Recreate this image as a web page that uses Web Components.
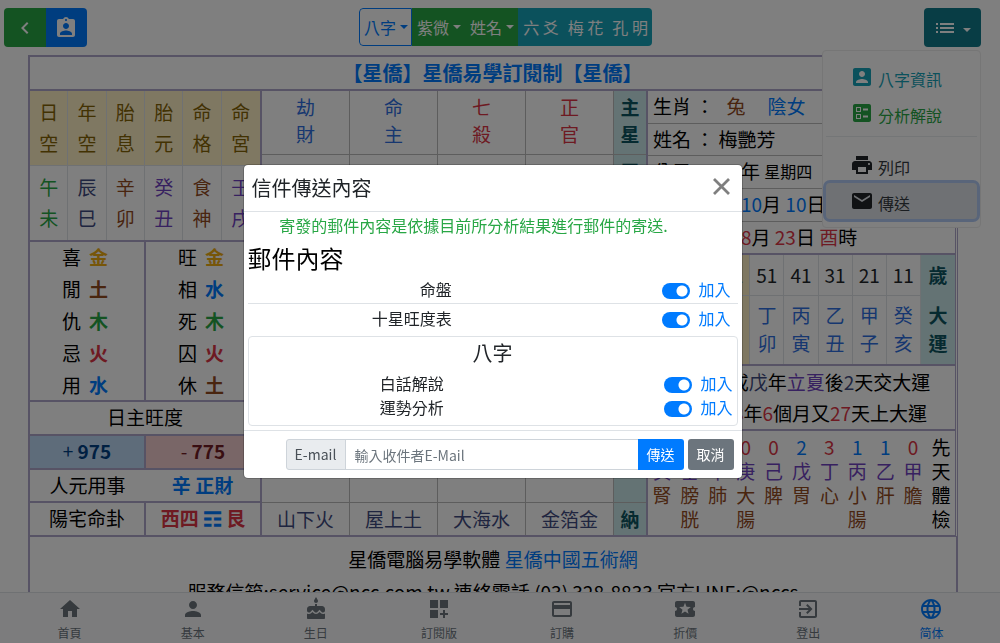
<!DOCTYPE html>
<html lang="zh-Hant">
<head>
<meta charset="utf-8">
<meta name="viewport" content="width=device-width, initial-scale=1">
<title>星僑易學訂閱制</title>
<style>
  :root {
    --blue: #007bff; --green: #28a745; --teal: #17a2b8; --red: #dc3545; --royal: #2f6fe0;
    --purple: #6f42c1; --brown: #934a1e; --navy: #3f4a80; --gold: #eeac12;
    --rule: #aea6ca; --thin: #bbb; --cell: #dee2e6; --head: #c8e6e8; --sand: #fff0c4;
  }
  html { height: 100%; overflow: hidden; }
  body {
    margin: 0; padding-right: 15px; box-sizing: border-box; height: 100%;
    overflow: hidden; background: #fff; color: #000;
    font: 19px/32px "Noto Sans CJK TC", "Noto Sans", sans-serif;
  }
</style>
</head>
<body>
<app-header></app-header>
<fate-chart>
  <span slot="title">【星僑】星僑易學訂閱制【星僑】</span>
</fate-chart>
<bottom-nav></bottom-nav>
<mail-modal>
  <span slot="title">信件傳送內容</span>
  <join-row name="命盤"></join-row>
  <join-row name="十星旺度表"></join-row>
  <join-row name="白話解說" slot="card"></join-row>
  <join-row name="運勢分析" slot="card"></join-row>
</mail-modal>

<script>
const ICONS = {
  back: 'M15.41 16.59L10.83 12l4.58-4.59L14 6l-6 6 6 6z',
  clip: 'M19 3h-4.18C14.4 1.84 13.3 1 12 1c-1.3 0-2.4.84-2.82 2H5c-1.1 0-2 .9-2 2v14c0 1.1.9 2 2 2h14c1.1 0 2-.9 2-2V5c0-1.1-.9-2-2-2zm-7 0c.55 0 1 .45 1 1s-.45 1-1 1-1-.45-1-1 .45-1 1-1zm0 4c1.66 0 3 1.34 3 3s-1.34 3-3 3-3-1.34-3-3 1.34-3 3-3zm6 12H6v-1.4c0-2 4-3.1 6-3.1s6 1.1 6 3.1V19z',
  list: 'M3 13h2v-2H3v2zm0 4h2v-2H3v2zm0-8h2V7H3v2zm4 4h14v-2H7v2zm0 4h14v-2H7v2zM7 7v2h14V7H7z',
  account: 'M3 5v14c0 1.1.89 2 2 2h14c1.1 0 2-.9 2-2V5c0-1.1-.9-2-2-2H5c-1.11 0-2 .9-2 2zm12 4c0 1.66-1.34 3-3 3s-3-1.34-3-3 1.34-3 3-3 3 1.34 3 3zm-9 8c0-2 4-3.1 6-3.1s6 1.1 6 3.1v1H6v-1z',
  ballot: 'M13 9.5h5v-2h-5v2zm0 7h5v-2h-5v2zm6 4.5H5c-1.1 0-2-.9-2-2V5c0-1.1.9-2 2-2h14c1.1 0 2 .9 2 2v14c0 1.1-.9 2-2 2zM6 11h5V6H6v5zm1-4h3v3H7V7zM6 18h5v-5H6v5zm1-4h3v3H7v-3z',
  print: 'M19 8H5c-1.66 0-3 1.34-3 3v6h4v4h12v-4h4v-6c0-1.66-1.34-3-3-3zm-3 11H8v-5h8v5zm3-7c-.55 0-1-.45-1-1s.45-1 1-1 1 .45 1 1-.45 1-1 1zm-1-9H6v4h12V3z',
  mail: 'M20 4H4c-1.1 0-1.99.9-1.99 2L2 18c0 1.1.9 2 2 2h16c1.1 0 2-.9 2-2V6c0-1.1-.9-2-2-2zm0 4l-8 5-8-5V6l8 5 8-5v2z',
  home: 'M10 20v-6h4v6h5v-8h3L12 3 2 12h3v8z',
  person: 'M12 12c2.21 0 4-1.79 4-4s-1.79-4-4-4-4 1.79-4 4 1.79 4 4 4zm0 2c-2.67 0-8 1.34-8 4v2h16v-2c0-2.66-5.33-4-8-4z',
  cake: 'M12 6c1.11 0 2-.9 2-2 0-.38-.1-.73-.29-1.03L12 0l-1.71 2.97c-.19.3-.29.65-.29 1.03 0 1.1.9 2 2 2zm4.6 9.99l-1.07-1.07-1.08 1.07c-1.3 1.3-3.58 1.31-4.89 0l-1.07-1.07-1.09 1.07C6.75 16.64 5.88 17 4.96 17c-.73 0-1.4-.23-1.96-.61V21c0 .55.45 1 1 1h16c.55 0 1-.45 1-1v-4.61c-.56.38-1.23.61-1.96.61-.92 0-1.79-.36-2.44-1.01zM18 9h-5V7h-2v2H6c-1.66 0-3 1.34-3 3v1.54c0 1.08.88 1.96 1.96 1.96.52 0 1.02-.2 1.38-.57l2.14-2.13 2.13 2.13c.74.74 2.03.74 2.77 0l2.14-2.13 2.13 2.13c.37.37.86.57 1.38.57 1.08 0 1.96-.88 1.96-1.96V12C21 10.34 19.66 9 18 9z',
  widgets: 'M3 11h8V3H3v8zM13 3v8h8V3h-8zM3 21h8v-8H3v8zM18 13h-2v3h-3v2h3v3h2v-3h3v-2h-3z',
  card: 'M20 4H4c-1.11 0-1.99.89-1.99 2L2 18c0 1.11.89 2 2 2h16c1.11 0 2-.89 2-2V6c0-1.11-.89-2-2-2zm0 14H4v-6h16v6zm0-10H4V6h16v2z',
  ticket: 'M20 12c0-1.1.9-2 2-2V6c0-1.1-.9-2-2-2H4c-1.1 0-1.99.9-1.99 2v4c1.1 0 1.99.9 1.99 2s-.89 2-2 2v4c0 1.1.9 2 2 2h16c1.1 0 2-.9 2-2v-4c-1.1 0-2-.9-2-2zm-4.42 4.8L12 14.5l-3.58 2.3 1.08-4.12-3.29-2.69 4.24-.25L12 5.8l1.54 3.95 4.24.25-3.29 2.69 1.09 4.11z',
  exit: 'M10.09 15.59L11.5 17l5-5-5-5-1.41 1.41L12.67 11H3v2h9.67l-2.58 2.59zM19 3H5c-1.11 0-2 .9-2 2v4h2V5h14v14H5v-4H3v4c0 1.1.89 2 2 2h14c1.1 0 2-.9 2-2V5c0-1.1-.9-2-2-2z',
  globe: 'M11.99 2C6.47 2 2 6.48 2 12s4.47 10 9.99 10C17.52 22 22 17.52 22 12S17.52 2 11.99 2zm6.93 6h-2.95c-.32-1.25-.78-2.45-1.38-3.56 1.84.63 3.37 1.91 4.33 3.56zM12 4.04c.83 1.2 1.48 2.53 1.91 3.96h-3.82c.43-1.43 1.08-2.76 1.91-3.96zM4.26 14C4.1 13.36 4 12.69 4 12s.1-1.36.26-2h3.38c-.08.66-.14 1.32-.14 2 0 .68.06 1.34.14 2H4.26zm.82 2h2.95c.32 1.25.78 2.45 1.38 3.56-1.84-.63-3.37-1.9-4.33-3.56zm2.95-8H5.08c.96-1.66 2.49-2.93 4.33-3.56C8.81 5.55 8.35 6.75 8.03 8zM12 19.96c-.83-1.2-1.48-2.53-1.91-3.96h3.82c-.43 1.43-1.08 2.76-1.91 3.96zM14.34 14H9.66c-.09-.66-.16-1.32-.16-2 0-.68.07-1.35.16-2h4.68c.09.65.16 1.32.16 2 0 .68-.07 1.34-.16 2zm.25 5.56c.6-1.11 1.06-2.31 1.38-3.56h2.95c-.96 1.65-2.49 2.93-4.33 3.56zM16.36 14c.08-.66.14-1.32.14-2 0-.68-.06-1.34-.14-2h3.38c.16.64.26 1.31.26 2s-.1 1.36-.26 2h-3.38z'
};

const COLORS = `
  .blue{color:var(--blue)} .green{color:var(--green)} .red{color:var(--red)}
  .purple{color:var(--purple)} .brown{color:var(--brown)} .navy{color:var(--navy)}
  .gold{color:var(--gold)} .teal{color:var(--teal)} .royal{color:var(--royal)}`;

class Base extends HTMLElement {
  constructor() { super(); this.attachShadow({ mode: 'open' }); }
  connectedCallback() { this.shadowRoot.innerHTML = `<style>*{box-sizing:border-box}${this.css()}</style>${this.html()}`; }
}

customElements.define('app-icon', class extends Base {
  css() { return ':host{display:block;width:24px;height:24px;flex:none} svg{display:block;width:100%;height:100%;fill:currentColor}'; }
  html() { return `<svg viewBox="0 0 24 24" aria-hidden="true"><path d="${ICONS[this.getAttribute('name')]}"/></svg>`; }
});

customElements.define('app-header', class extends Base {
  css() { return `
    :host{display:flex;justify-content:space-between;align-items:flex-start;padding:8px 4px;height:55px;box-sizing:border-box}
    button{font:inherit;border:0;margin:0;padding:0;color:#fff;display:flex;align-items:center;justify-content:center;height:100%}
    .group{display:flex;height:39px;border-radius:4px;overflow:hidden}
    .tools{width:83px}
    .tools button{flex:1}
    .nav{height:38px;font-size:16px;line-height:24px}
    .nav button{padding:0 4px 0 5px;gap:4px;white-space:nowrap}
    .nav .outline{background:#fff;color:var(--blue);border:1px solid var(--blue);border-radius:4px 0 0 4px;padding:0 3px 0 4px}
    .g{background:var(--green)} .b{background:var(--blue)} .t{background:var(--teal)}
    .caret::after{content:"";border:4px solid transparent;border-top-color:currentColor;border-bottom:0}
    .more{position:relative;height:39px}
    .more>button{width:57px;background:#117a8b;border-radius:4px;gap:6px}
    .more>button::after{margin-top:5px}
  `; }
  html() { return `
    <div class="group tools">
      <button class="g" aria-label="返回"><app-icon name="back"></app-icon></button>
      <button class="b" aria-label="命盤資料"><app-icon name="clip"></app-icon></button>
    </div>
    <nav class="group nav">
      <button class="outline caret">八字</button>
      <button class="g caret">紫微</button>
      <button class="g caret">姓名</button>
      <button class="t">六 爻</button>
      <button class="t">梅 花</button>
      <button class="t">孔 明</button>
    </nav>
    <div class="more">
      <button class="caret" aria-label="選單"><app-icon name="list"></app-icon></button>
      <action-menu></action-menu>
    </div>`; }
});

customElements.define('action-menu', class extends Base {
  css() { return `
    :host{position:absolute;z-index:5;top:42px;right:0;width:159px;box-sizing:border-box;padding:8px 3px;background:#fff;
      border:1px solid #ececec;border-radius:4px;font-size:16px;line-height:24px}
    a{display:flex;align-items:center;gap:4px;height:36px;padding:0 24px;text-decoration:none;color:#343a40;white-space:nowrap}
    app-icon{color:#212529}
    .teal app-icon{color:var(--teal)} .green app-icon{color:var(--green)}
    a span{padding-top:4px}
    .on{background:#dfe3e8;border-radius:4px;box-shadow:0 0 0 3px #b3cbf5}
    hr{margin:5px 0 10px;border:0;border-top:1px solid #e9ecef}
    ${COLORS} a.teal{color:var(--teal)} a.green{color:var(--green)}`; }
  html() { return `
    <a href="#" class="teal"><app-icon name="account"></app-icon><span>八字資訊</span></a>
    <a href="#" class="green"><app-icon name="ballot"></app-icon><span>分析解說</span></a>
    <hr>
    <a href="#"><app-icon name="print"></app-icon><span>列印</span></a>
    <a href="#" class="on"><app-icon name="mail"></app-icon><span>傳送</span></a>`; }
});

customElements.define('fate-chart', class extends Base {
  css() { return `
    :host{display:block;margin:0 27px 0 28px;border:2px solid var(--rule);border-right:0}
    h1{margin:0;font-size:20px;line-height:32px;text-align:center;color:var(--blue);border-bottom:2px solid var(--rule);border-right:3px double var(--rule)}
    .grid{display:grid;grid-template-columns:232fr 386fr 307fr;border-bottom:2px solid var(--rule);border-right:3px double var(--rule)}
    footer{border-right:2px solid var(--rule);padding:5px 0 60px;text-align:center;line-height:33px}
    footer p{margin:0}
    a{color:var(--blue);text-decoration:none}`; }
  html() { return `
    <h1><slot name="title"></slot></h1>
    <div class="grid"><fate-balance></fate-balance><fate-pillars></fate-pillars><fate-details></fate-details></div>
    <footer>
      <p>星僑電腦易學軟體 <a href="#">星僑中國五術網</a></p>
      <p>服務信箱:service@ncc.com.tw 連絡電話 (03) 328-8833 官方LINE:@nccs</p>
    </footer>`; }
});

customElements.define('fate-balance', class extends Base {
  css() { return `
    :host{display:block;border-right:2px solid var(--rule)}
    table{width:100%;table-layout:fixed;border-spacing:0;line-height:31px}
    th,td{padding:0 0 2px;text-align:center;font-weight:400;height:74px;border-right:1px solid var(--cell)}
    th{height:75px;background:var(--sand);color:#856404;border-bottom:1px solid var(--cell)}
    tr>:last-child{border-right:0}
    .pair{display:grid;grid-template-columns:1fr 1fr;gap:2px;background:var(--rule);border-top:2px solid var(--rule);text-align:center;line-height:30px}
    .pair>*{background:#fff;padding-bottom:2px}
    .pair.joined{gap:0}
    .joined>*{padding-bottom:1px}
    .pair>ul{margin:0;padding:0 4px 0 0;list-style:none;display:grid;gap:2px}
    li{display:flex;justify-content:center;gap:8px}
    .whole{grid-column:1/-1}
    .pair .plus{background:#bcd8f5;color:#004085} .pair .minus{background:#f2cccf;color:#721c24}
    .gua{font-weight:400}
    ${COLORS}`; }
  html() {
    const list = rows => `<ul>${rows.map(([k, v, c]) => `<li><span>${k}</span><b class="${c}">${v}</b></li>`).join('')}</ul>`;
    return `
    <table>
      <tr>${['日空', '年空', '胎息', '胎元', '命格', '命宮'].map(t => `<th scope="col">${t[0]}<br>${t[1]}</th>`).join('')}</tr>
      <tr>${[['午未', 'green'], ['辰巳', 'navy'], ['辛卯', 'brown'], ['癸丑', 'purple'], ['食神', 'brown'], ['壬戌', 'purple']]
        .map(([t, c]) => `<td class="${c}">${t[0]}<br>${t[1]}</td>`).join('')}</tr>
    </table>
    <div class="pair">
      ${list([['喜', '金', 'gold'], ['閒', '土', 'brown'], ['仇', '木', 'green'], ['忌', '火', 'red'], ['用', '水', 'blue']])}
      ${list([['旺', '金', 'gold'], ['相', '水', 'blue'], ['死', '木', 'green'], ['囚', '火', 'red'], ['休', '土', 'brown']])}
    </div>
    <div class="pair"><div class="whole">日主旺度</div></div>
    <div class="pair"><div class="plus">+ <b>975</b></div><div class="minus">- <b>775</b></div></div>
    <div class="pair joined"><div>人元用事</div><b class="blue">辛 正財</b></div>
    <div class="pair"><div>陽宅命卦</div><b class="red">西四 <span class="blue gua">☶</span> 艮</b></div>`;
  }
});

customElements.define('fate-pillars', class extends Base {
  css() { return `
    :host{display:block;border-right:2px solid var(--rule)}
    table{width:100%;table-layout:fixed;border-spacing:0;line-height:27px}
    td,th{padding:2px 0 0;vertical-align:top;text-align:center;height:64px;border-bottom:1px solid var(--thin)}
    td{border-right:1px solid var(--thin)}
    th{background:var(--head);color:#0c5460}
    .rest>*{height:284px}
    .nayin>*{height:32px;padding:0;line-height:32px;border-bottom:0}
    col.h{width:32px}
    ${COLORS}`; }
  html() { return `
    <table>
      <colgroup><col><col><col><col><col class="h"></colgroup>
      <tr><td class="royal">劫<br>財</td><td class="royal">命<br>主</td><td class="red">七<br>殺</td><td class="red">正<br>官</td><th scope="row">主<br>星</th></tr>
      <tr><td></td><td></td><td></td><td></td><th scope="row">天<br>干</th></tr>
      <tr class="rest"><td></td><td></td><td></td><td></td><th></th></tr>
      <tr class="nayin navy"><td>山下火</td><td>屋上土</td><td>大海水</td><td>金箔金</td><th scope="row">納</th></tr>
    </table>`; }
});

customElements.define('fate-details', class extends Base {
  css() { return `
    :host{display:block}
    .line{display:flex;height:33px;line-height:30px;padding-left:5px;border-bottom:1px solid var(--thin);white-space:pre}
    .low{height:32px}
    .end{border-bottom:2px solid var(--rule)}
    .lead{width:88px;display:flex;justify-content:space-between}
    .gap{padding-left:22px} .gap2{padding-left:8px}
    small{font-size:16px}
    table{width:100%;table-layout:fixed;border-spacing:0;text-align:center}
    td,th{padding:0}
    .luck{line-height:28px;border-bottom:2px solid var(--rule)}
    .luck td,.luck th{padding-bottom:2px}
    .luck td{height:68px;border-right:1px solid var(--cell);color:var(--royal)}
    .luck .age td{height:41px;border-bottom:1px solid var(--cell);color:#212529;padding-bottom:0}
    .luck th{background:var(--head);color:#0c5460}
    .luck .now{background:var(--sand)}
    .when{text-align:center;padding:0 0 1px;line-height:31px;border-bottom:2px solid var(--rule)}
    .when p{margin:0}
    .body{line-height:24px;margin:4px 0}
    .body td,.body th{height:24px;font-weight:400}
    ${COLORS}`; }
  html() {
    const luck = [['81', '庚', '午'], ['71', '己', '巳'], ['61', '戊', '辰'], ['51', '丁', '卯'], ['41', '丙', '寅'], ['31', '乙', '丑'], ['21', '甲', '子'], ['11', '癸', '亥']];
    const now = a => a === '61' ? ' class="now"' : '';
    const row = (h, s, f) => `<tr>${[...s].map(f).join('')}<th scope="row">${h}</th></tr>`;
    return `
    <div class="line">生肖 ： <span class="brown gap2">兔</span><span class="blue gap">陰女</span></div>
    <div class="line low">姓名 ： 梅艷芳</div>
    <div class="line"><span class="lead"><span>公元</span><span class="purple">1963</span></span>年 <small>星期四</small></div>
    <div class="line"><span class="lead">國曆</span><span class="blue">10</span>月 <span class="blue">10</span>日</div>
    <div class="line end"><span class="lead">農曆</span><span class="red">8</span>月 <span class="red">23</span>日 <span class="red">酉</span>時</div>
    <table class="luck">
      <tr class="age">${luck.map(l => `<td${now(l[0])}>${l[0]}</td>`).join('')}<th scope="row">歲</th></tr>
      <tr>${luck.map(l => `<td${now(l[0])}>${l[1]}<br>${l[2]}</td>`).join('')}<th scope="row">大<br>運</th></tr>
    </table>
    <div class="when">
      <p>每逢癸或<span class="navy">戊</span>年<span class="purple">立夏</span>後<span class="navy">2</span>天交大運</p>
      <p>出生後<span class="red">8</span>年<span class="red">6</span>個月又<span class="red">27</span>天上大運</p>
    </div>
    <table class="body">
      ${row('先', '0100023110', c => `<td class="${c === '1' || c === '2' ? 'blue' : 'red'}">${c}</td>`)}
      ${row('天', '癸壬辛庚己戊丁丙乙甲', c => `<td class="purple">${c}</td>`)}
      ${row('體', '腎膀肺大脾胃心小肝膽', c => `<td class="brown">${c}</td>`)}
      ${row('檢', ' 胱 腸   腸  ', c => `<td class="brown">${c}</td>`)}
    </table>`;
  }
});

customElements.define('bottom-nav', class extends Base {
  css() { return `
    :host{position:fixed;left:0;right:0;bottom:0;height:51px;box-sizing:border-box;padding-right:15px;z-index:4;
      display:grid;grid-template-columns:repeat(8,1fr);background:#f8f9fa;border-top:1px solid #dee2e6;font-size:12px;line-height:18px}
    a{display:flex;flex-direction:column;align-items:center;color:#6c757d;text-decoration:none;gap:3px;padding-top:4px;padding-left:16px}
    a:last-child{color:var(--blue);font-family:"Noto Sans CJK SC",sans-serif}`; }
  html() {
    return [['home', '首頁'], ['person', '基本'], ['cake', '生日'], ['widgets', '訂閱版'], ['card', '訂購'], ['ticket', '折價'], ['exit', '登出'], ['globe', '简体']]
      .map(([i, t]) => `<a href="#"><app-icon name="${i}"></app-icon><span>${t}</span></a>`).join('');
  }
});

customElements.define('join-row', class extends Base {
  css() { return `
    :host{display:grid;grid-template-columns:5fr 7fr;align-items:center;font-size:16px;line-height:24px;height:28px;text-align:right}
    :host([slot=card]){grid-template-columns:2fr 3fr;height:24px}
    :host(:first-of-type){border-bottom:1px solid #dee2e6}
    span{color:#212529}
    label{display:flex;justify-content:flex-end;align-items:center;gap:8px;padding-right:7px;color:var(--blue)}
    :host([slot=card]) label{padding-right:4px}
    input{appearance:none;margin:3px 0 0;width:28px;height:16px;border-radius:8px;background:radial-gradient(circle at 20px 8px,#fff 5px,transparent 6px) var(--blue)}`; }
  html() { return `<span>${this.getAttribute('name')}</span><label><input type="checkbox" checked aria-label="${this.getAttribute('name')}加入">加入</label>`; }
});

customElements.define('mail-modal', class extends Base {
  css() { return `
    :host{position:fixed;inset:0;z-index:10;display:flex;align-items:center;justify-content:center;padding-right:15px;background:rgba(0,0,0,.5)}
    section{width:100%;max-width:500px;background:#fff;background-clip:padding-box;border:1px solid rgba(0,0,0,.2);border-radius:5px;color:#212529}
    header{display:flex;align-items:center;justify-content:space-between;height:47px;padding:0 12px 0 8px;border-bottom:1px solid #dee2e6}
    h2{margin:0;font-size:20px;line-height:30px;font-weight:400}
    header button{border:0;background:none;padding:0;width:17px;height:17px;margin-bottom:4px}
    header svg{display:block}
    .main{padding:1px 4px 4px}
    .note{margin:0;font-size:16px;line-height:24px;color:var(--green);text-align:center;padding-right:38px}
    h3{margin:4px 0 0;font-size:24px;line-height:34px;font-weight:400;color:#000}
    .card{margin-top:4px;border:1px solid #dee2e6;border-radius:4px;padding:1px 0 6px}
    h4{margin:0 0 3px;font-size:20px;line-height:30px;font-weight:400;text-align:center}
    form{display:flex;padding:8px 8px 8px 42px;border-top:1px solid #dee2e6;font-size:14px;line-height:21px}
    form>*{height:31px;font:inherit;box-sizing:border-box}
    label{width:60px;padding:4px 0;text-align:center;background:#e9ecef;border:1px solid #ced4da;border-radius:3px 0 0 3px;color:#495057}
    input{flex:1;min-width:0;margin:0 0 0 -1px;padding:4px 9px;border:1px solid #ced4da;border-right:0;background:#fff}
    input::placeholder{color:#6c757d;opacity:1}
    form button{width:46px;border:0;padding:0;color:#fff}
    .send{background:var(--blue);border-radius:0 3px 3px 0}
    .cancel{background:#6c757d;border-radius:3px;margin-left:4px}`; }
  html() { return `
    <section role="dialog" aria-modal="true" aria-labelledby="t">
      <header><h2 id="t"><slot name="title"></slot></h2>
        <button aria-label="關閉"><svg width="17" height="17" viewBox="0 0 17 17"><path d="M1 1l15 15M16 1L1 16" stroke="#7f7f7f" stroke-width="2.8" fill="none"/></svg></button></header>
      <div class="main">
        <p class="note">寄發的郵件內容是依據目前所分析結果進行郵件的寄送.</p>
        <h3>郵件內容</h3>
        <slot></slot>
        <div class="card"><h4>八字</h4><slot name="card"></slot></div>
      </div>
      <form>
        <label for="mail">E-mail</label>
        <input id="mail" type="email" placeholder="輸入收件者E-Mail">
        <button type="button" class="send">傳送</button>
        <button type="button" class="cancel">取消</button>
      </form>
    </section>`; }
});
</script>
</body>
</html>
